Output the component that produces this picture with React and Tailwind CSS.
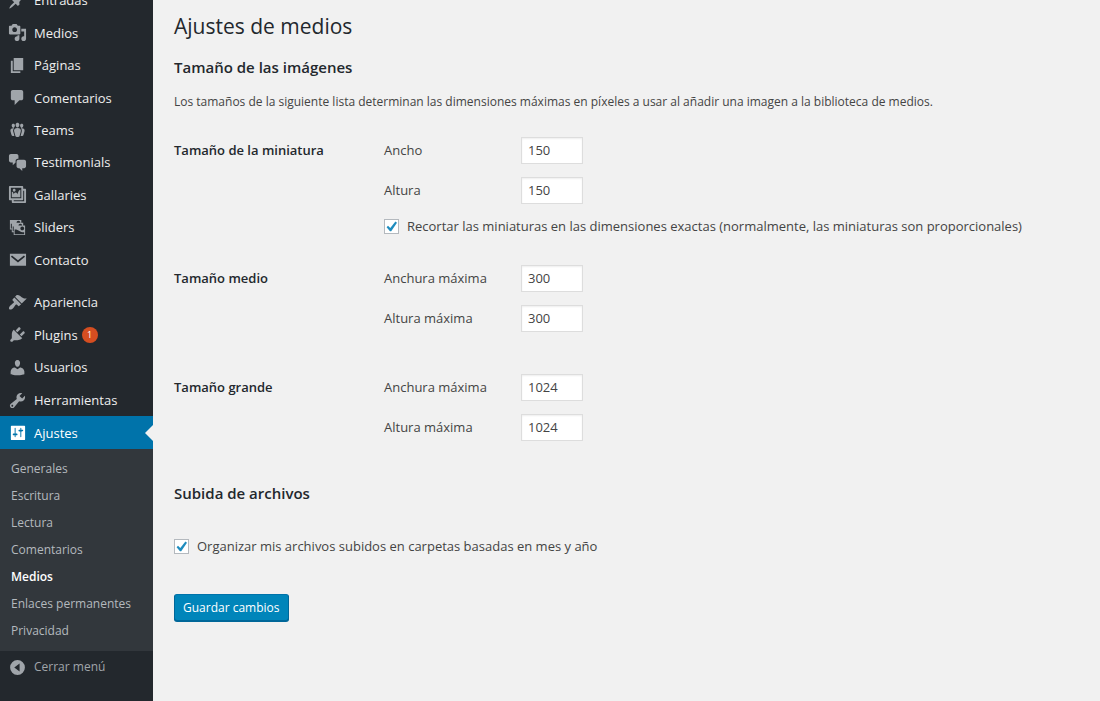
import React from "react";

const icons = {
  post: "M10.44 3.02l1.82-1.82 6.36 6.35-1.83 1.82c-1.05-.68-2.48-.57-3.41.36l-.75.75c-.92.93-1.04 2.35-.35 3.41l-1.83 1.82-2.41-2.41-2.8 2.79c-.42.42-3.38 2.71-3.8 2.29s1.86-3.39 2.28-3.81l2.79-2.79L4.1 9.36l1.83-1.82c1.05.69 2.48.57 3.4-.36l.75-.75c.93-.92 1.05-2.35.36-3.41z",
  media: "M13 11V4c0-.55-.45-1-1-1h-1.67L9 1H5L3.67 3H2c-.55 0-1 .45-1 1v7c0 .55.45 1 1 1h10c.55 0 1-.45 1-1zM7 4.5c1.38 0 2.5 1.12 2.5 2.5S8.38 9.5 7 9.5 4.5 8.38 4.5 7 5.62 4.5 7 4.5zM14 6h5v10.5c0 1.38-1.12 2.5-2.5 2.5S14 17.88 14 16.5s1.12-2.5 2.5-2.5c.17 0 .34.02.5.05V9h-3V6zm-4 8.05V13h2v3.5c0 1.38-1.12 2.5-2.5 2.5S7 17.88 7 16.5 8.12 14 9.5 14c.17 0 .34.02.5.05z",
  page: "M6 15V2h10v13H6zm-1 1h8v2H3V5h2v11z",
  comments: "M5 2h9c1.1 0 2 .9 2 2v7c0 1.1-.9 2-2 2h-2l-5 5v-5H5c-1.1 0-2-.9-2-2V4c0-1.1.9-2 2-2z",
  groups: "M8.03 4.46c-.29 1.28.55 3.46 1.97 3.46 1.41 0 2.25-2.18 1.96-3.46-.22-.98-1.08-1.63-1.96-1.63-.89 0-1.74.65-1.97 1.63zm-4.13.9c-.25 1.08.47 2.93 1.67 2.93s1.92-1.85 1.67-2.93c-.19-.83-.92-1.39-1.67-1.39s-1.48.56-1.67 1.39zm8.86 0c-.25 1.08.47 2.93 1.66 2.93 1.2 0 1.92-1.85 1.67-2.93-.19-.83-.92-1.39-1.67-1.39-.74 0-1.47.56-1.66 1.39zm-.59 11.43l1.25-4.3C14.2 10 12.71 8.47 10 8.47c-2.72 0-4.21 1.53-3.44 4.02l1.26 4.3C8.05 17.51 9 18 10 18c.98 0 1.94-.49 2.17-1.21zm-6.1-7.63c-.49.67-.96 1.83-.42 3.59l1.12 3.79c-.34.2-.77.31-1.2.31-.85 0-1.65-.41-1.85-1.03l-1.07-3.65c-.65-2.11.61-3.4 2.92-3.4.27 0 .54.02.79.06-.1.1-.2.22-.29.33zm8.35-.39c2.31 0 3.58 1.29 2.92 3.4l-1.07 3.65c-.2.62-1 1.03-1.85 1.03-.43 0-.86-.11-1.2-.31l1.11-3.77c.55-1.78.08-2.94-.42-3.61-.08-.11-.18-.23-.28-.33.25-.04.51-.06.79-.06z",
  chat: "M11 6h-.82C9.07 6 8 7.2 8 8.16V10l-3 3v-3H3c-1.1 0-2-.9-2-2V3c0-1.1.9-2 2-2h6c1.1 0 2 .9 2 2v3zm0 1h6c1.1 0 2 .9 2 2v5c0 1.1-.9 2-2 2h-2v3l-3-3h-1c-1.1 0-2-.9-2-2V9c0-1.1.9-2 2-2z",
  gallery: "M16 4h1.96c.57 0 1.04.47 1.04 1.04v12.92c0 .57-.47 1.04-1.04 1.04H5.04C4.47 19 4 18.53 4 17.96V16H2.04C1.47 16 1 15.53 1 14.96V2.04C1 1.47 1.47 1 2.04 1h12.92c.57 0 1.04.47 1.04 1.04V4zM3 14h11V3H3v11zm5-8.5C8 4.67 7.33 4 6.5 4S5 4.67 5 5.5 5.67 7 6.5 7 8 6.33 8 5.5zm2 4.5s1-5 3-5v8H4V7c2 0 2 3 2 3s.33-2 2-2 2 2 2 2zm7 7V6h-1v8.96c0 .57-.47 1.04-1.04 1.04H6v1h11z",
  images: "M4 15v-3H2V2h12v3h2v3h2v10H6v-3H4zm7-12c-1.1 0-2 .9-2 2h4c0-1.1-.89-2-2-2zm-7 8V6H3v5h1zm7-3h4c0-1.1-.89-2-2-2-1.1 0-2 .9-2 2zm-5 6V9H5v5h1zm9-1c1.1 0 2-.89 2-2 0-1.1-.9-2-2-2s-2 .9-2 2c0 1.11.9 2 2 2zm2 4v-2c-5 0-5-3-10-3v5h10z",
  email: "M2 4h17v12.5H2zM4.2 5.9l-1.1 1.3 7.4 6 7.4-6-1.1-1.3-6.3 4.8z",
  appearance: "M14.48 11.06L7.41 3.99l1.5-1.5c.5-.56 2.3-.47 3.51.32 1.21.8 1.43 1.28 2.91 2.1 1.18.64 2.45 1.26 4.45.85zm-.71.71L6.7 4.7 4.93 6.47c-.39.39-.39 1.02 0 1.41l1.06 1.06c.39.39.39 1.03 0 1.42-.6.6-1.43 1.11-2.21 1.69-.35.26-.7.53-1.01.84C1.43 14.23.4 16.08 1.4 17.07c.99 1 2.84-.03 4.18-1.36.31-.31.58-.66.85-1.02.57-.78 1.08-1.61 1.69-2.21.39-.39 1.02-.39 1.41 0l1.06 1.06c.39.39 1.02.39 1.41 0z",
  plugins: "M13.11 4.36L9.87 7.6 8 5.73l3.24-3.24c.35-.34 1.05-.2 1.56.32.52.51.66 1.21.31 1.55zm-8 1.77l.91-1.12 9.01 9.01-1.19.84c-.71.71-2.63 1.16-3.82 1.16H6.14L4.9 17.26c-.59.59-1.54.59-2.12 0-.59-.58-.59-1.53 0-2.12l1.24-1.24v-3.88c0-1.13.4-3.19 1.09-3.89zm7.26 3.97l3.24-3.24c.34-.35 1.04-.21 1.55.31.52.51.66 1.21.31 1.55l-3.24 3.25z",
  users: "M10 9.25c-2.27 0-2.73-3.44-2.73-3.44C7 4.02 7.82 2 9.97 2c2.16 0 2.98 2.02 2.71 3.81 0 0-.41 3.44-2.68 3.44zm0 2.57L12.72 10c2.39 0 4.52 2.33 4.52 4.53v2.49s-3.65 1.13-7.24 1.13c-3.65 0-7.24-1.13-7.24-1.13v-2.49c0-2.25 1.94-4.48 4.47-4.48z",
  tools: "M16.68 9.77c-1.34 1.34-3.3 1.67-4.95.99l-5.41 6.52c-.99.99-2.59.99-3.58 0s-.99-2.59 0-3.57l6.52-5.42c-.68-1.65-.35-3.61.99-4.95 1.28-1.28 3.12-1.62 4.72-1.06l-2.89 2.89 2.82 2.82 2.86-2.87c.53 1.58.18 3.39-1.08 4.65zM3.81 16.21c.4.39 1.04.39 1.43 0 .4-.4.4-1.04 0-1.43-.39-.4-1.03-.4-1.43 0-.39.39-.39 1.03 0 1.43z",
  settings: "M18 16V4c0-.55-.45-1-1-1H4c-.55 0-1 .45-1 1v13c0 .55.45 1 1 1h13c.55 0 1-.45 1-1zM8 11h1c.55 0 1 .45 1 1s-.45 1-1 1H8v1.5c0 .28-.22.5-.5.5s-.5-.22-.5-.5V13H6c-.55 0-1-.45-1-1s.45-1 1-1h1V5.5c0-.28.22-.5.5-.5s.5.22.5.5V11zm5-2h-1c-.55 0-1-.45-1-1s.45-1 1-1h1V5.5c0-.28.22-.5.5-.5s.5.22.5.5V7h1c.55 0 1 .45 1 1s-.45 1-1 1h-1v5.5c0 .28-.22.5-.5.5s-.5-.22-.5-.5V9z",
  collapse: "M10 2.2a7.8 7.8 0 1 0 0 15.6a7.8 7.8 0 1 0 0-15.6zM12.2 5.8v8.4L6.6 10z",
};

const contentMenu = [
  ["Entradas", "post"],
  ["Medios", "media"],
  ["Páginas", "page"],
  ["Comentarios", "comments"],
  ["Teams", "groups"],
  ["Testimonials", "chat"],
  ["Gallaries", "gallery"],
  ["Sliders", "images"],
  ["Contacto", "email"],
];

const adminMenu = [
  ["Apariencia", "appearance"],
  ["Plugins", "plugins", 1],
  ["Usuarios", "users"],
  ["Herramientas", "tools"],
  ["Ajustes", "settings"],
];

const subMenu = ["Generales", "Escritura", "Lectura", "Comentarios", "Medios", "Enlaces permanentes", "Privacidad"];

function Icon({ name }) {
  return (
    <svg viewBox="0 0 20 20" className="size-[19px] shrink-0" fill="currentColor" fillRule="evenodd" aria-hidden="true">
      <path d={icons[name]} />
    </svg>
  );
}

function MenuItem({ label, icon, count, active }) {
  return (
    <li className="flex">
      <a
        href="#"
        aria-current={active ? "true" : undefined}
        className={
          active
            ? "relative flex flex-1 items-center bg-[#0073aa] pl-2 text-white"
            : "flex flex-1 items-center pl-2 text-[#eeeeee]"
        }
      >
        <span className={active ? "text-white" : "text-[#a0a5aa]"}>
          <Icon name={icon} />
        </span>
        <span className="pl-[7px]">{label}</span>
        {count && (
          <span className="ml-1 flex size-4 items-center justify-center rounded-full bg-[#d54e21] text-[9px] text-white">
            {count}
          </span>
        )}
        {active && (
          <span className="absolute top-1/2 right-0 -mt-2 border-y-8 border-r-8 border-y-transparent border-r-[#f1f1f1]" />
        )}
      </a>
    </li>
  );
}

function CheckOption({ id, children }) {
  return (
    <div className="flex items-center gap-2">
      <span className="relative flex size-[15px] shrink-0">
        <input
          id={id}
          type="checkbox"
          defaultChecked
          className="peer size-[15px] appearance-none border border-[#b4b9be] bg-white"
        />
        <svg
          viewBox="0 0 15 15"
          className="pointer-events-none absolute inset-0 hidden peer-checked:block"
          fill="#1e8cbe"
          aria-hidden="true"
        >
          <path d="M11.4 2.6 13 3.8 7.2 12.2H6L2.6 8.2 4 6.8l2.3 2.1z" />
        </svg>
      </span>
      <label htmlFor={id}>{children}</label>
    </div>
  );
}

function SizeGroup({ title, fields, children }) {
  return (
    <div role="group" aria-label={title} className="grid grid-cols-[210px_minmax(0,1fr)]">
      <h3 className="font-semibold leading-10 text-[#23282d]">{title}</h3>
      <div>
        {fields.map(([id, label, value]) => (
          <div key={id} className="flex h-10 items-center">
            <label htmlFor={id} className="w-[137px]">
              {label}
            </label>
            <input
              id={id}
              type="number"
              defaultValue={value}
              className="h-[27px] w-[62px] border border-[#dddddd] bg-white px-1.5 text-[#444444] shadow-[inset_0_1px_2px_rgba(0,0,0,0.07)] [appearance:textfield] [&::-webkit-inner-spin-button]:appearance-none"
            />
          </div>
        ))}
        {children}
      </div>
    </div>
  );
}

export default function App() {
  return (
    <div className="flex min-h-screen overflow-hidden bg-[#f1f1f1] font-['Open_Sans','Noto_Sans',sans-serif] text-[13px] leading-5 text-[#444444]">
      <nav aria-label="Menú principal" className="w-[153px] shrink-0 bg-[#23282d]">
        <ul className="-mt-4 grid h-[292px] auto-rows-fr">
          {contentMenu.map(([label, icon]) => (
            <MenuItem key={label} label={label} icon={icon} />
          ))}
        </ul>
        <ul className="mt-[10px] grid h-[163px] auto-rows-fr">
          {adminMenu.map(([label, icon, count]) => (
            <MenuItem key={label} label={label} icon={icon} count={count} active={label === "Ajustes"} />
          ))}
        </ul>
        <ul className="bg-[#32373c] pt-[6px] pb-[7px] text-[12px] leading-[27px] text-[#b4b9be]">
          {subMenu.map((label) => (
            <li key={label}>
              <a href="#" className={label === "Medios" ? "block pl-[11px] font-semibold text-white" : "block pl-[11px]"}>
                {label}
              </a>
            </li>
          ))}
        </ul>
        <button type="button" className="flex h-8 w-full items-center gap-[7px] pl-2 text-[12px] text-[#a0a5aa]">
          <Icon name="collapse" />
          <span>Cerrar menú</span>
        </button>
      </nav>

      <main className="min-w-0 flex-1 px-[21px] pt-3">
        <h1 className="text-[21px] leading-7 text-[#23282d]">Ajustes de medios</h1>
        <form onSubmit={(e) => e.preventDefault()}>
          <h2 className="mt-[17px] text-[15px] font-semibold text-[#23282d]">Tamaño de las imágenes</h2>
          <p className="mt-[15px] text-[12px]">
            Los tamaños de la siguiente lista determinan las dimensiones máximas en píxeles a usar al añadir una imagen
            a la biblioteca de medios.
          </p>

          <div className="mt-[18px]">
            <SizeGroup
              title="Tamaño de la miniatura"
              fields={[
                ["thumb-w", "Ancho", 150],
                ["thumb-h", "Altura", 150],
              ]}
            >
              <div className="pt-[6px] pb-[22px]">
                <CheckOption id="thumb-crop">
                  Recortar las miniaturas en las dimensiones exactas (normalmente, las miniaturas son proporcionales)
                </CheckOption>
              </div>
            </SizeGroup>
            <SizeGroup
              title="Tamaño medio"
              fields={[
                ["medium-w", "Anchura máxima", 300],
                ["medium-h", "Altura máxima", 300],
              ]}
            />
            <div className="mt-[29px]">
              <SizeGroup
                title="Tamaño grande"
                fields={[
                  ["large-w", "Anchura máxima", 1024],
                  ["large-h", "Altura máxima", 1024],
                ]}
              />
            </div>
          </div>

          <h2 className="mt-9 text-[15px] font-semibold text-[#23282d]">Subida de archivos</h2>
          <div className="mt-[33px]">
            <CheckOption id="uploads-folders">
              Organizar mis archivos subidos en carpetas basadas en mes y año
            </CheckOption>
          </div>
          <button
            type="submit"
            className="mt-[38px] h-[27px] rounded-[3px] border border-[#006799] border-t-[#0073aa] bg-[#0085ba] px-2 text-[12px] text-white shadow-[0_1px_0_#006799]"
          >
            Guardar cambios
          </button>
        </form>
      </main>
    </div>
  );
}
